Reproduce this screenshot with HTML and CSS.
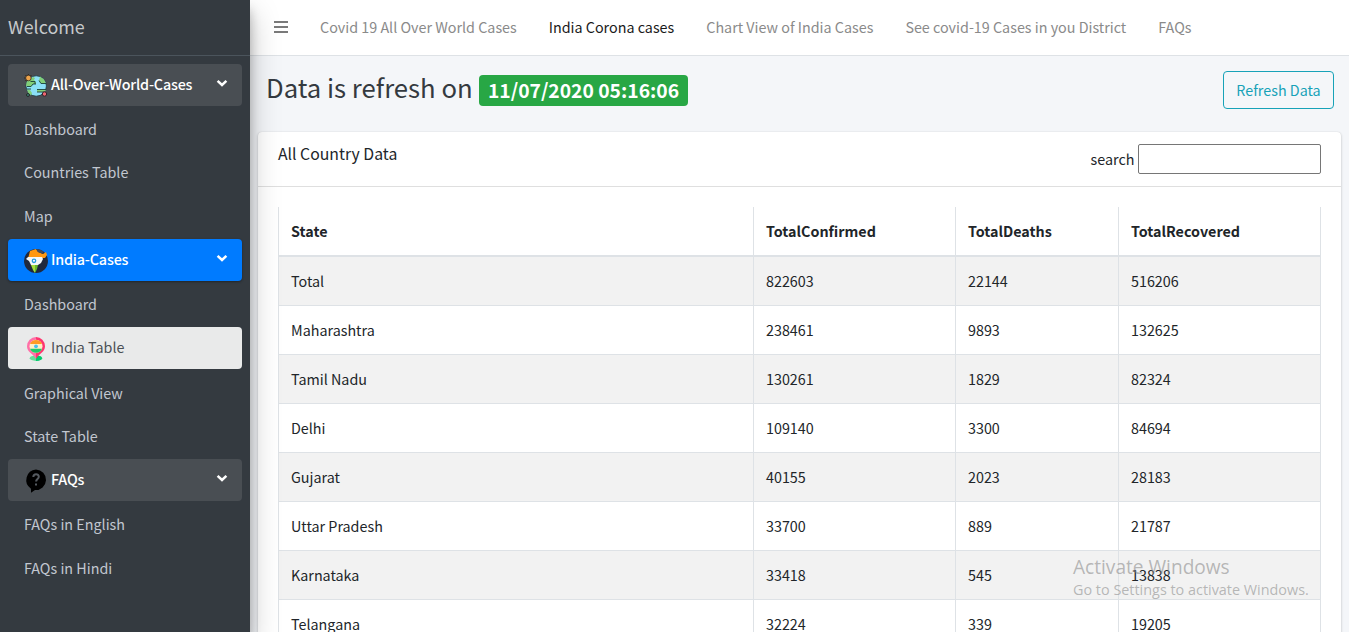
FILE: index.html
```html
<!DOCTYPE html>
<html lang="en">
<head>
<meta charset="utf-8">
<title>India Corona cases</title>
<link rel="stylesheet" href="styles.css">
</head>
<body>
<div class="wrapper">
  <aside class="sidebar">
    <div class="brand">Welcome</div>
    <nav class="menu">
      <div class="group group-world">
        <a class="item head">
          <svg class="icon" viewBox="0 0 24 24"><circle cx="12.200" cy="12" r="10.200" fill="#8be0f7" stroke="#17343c" stroke-width=".7"/><path d="M2.500 8.500L5 5.500 9 3l2 1-1 2 2 2v2H9l-2 3-5-1zM16 2.500l4 3 2 4h-5l-2-3zM3 15l3 1 2 3-1 2.500-3-3zM13 15.500h9l-1 2.500h-8z" fill="#82cf79"/><path d="M6.500 7.500H11v2.500M3 12.500h4l2-2.500h3M15 6.500l2 3h5M3 15h4M13 15.500h9M13 18h8" fill="none" stroke="#193f3a" stroke-width=".9"/><circle cx="4.400" cy="4" r="2.800" fill="#eda34b" stroke="#33291f" stroke-width=".8"/><path d="M4.400 0v1M0 4h1.200M1.400 1l1 1M7.500 1l-1 1M1.300 7l1-1" stroke="#33291f"/><circle cx="20.500" cy="20" r="2.200" fill="#ed6670" stroke="#33222a"/><circle cx="4" cy="21" r="1.400" fill="#439b8d" stroke="#222"/></svg>
          <span>All-Over-World-Cases</span>
          <svg class="caret" viewBox="0 0 12 8"><path d="M1.600 1.800L6 6l4.400-4.200" /></svg>
        </a>
        <a class="item">Dashboard</a>
        <a class="item">Countries Table</a>
        <a class="item">Map</a>
      </div>
      <div class="group">
        <a class="item head active">
          <svg class="icon" viewBox="0 0 24 24"><circle cx="12" cy="12" r="12" fill="#20293d"/><path d="M6 2l6-2 2 3 5 2 3-2 1 3-2 3H4l1-3z" fill="#ff9811"/><path d="M12 0q5 0 8 3l-2 1.500-4-1.500z" fill="#424b5d"/><path d="M4 8h14l1 2-2 4-3 2H7L5 12 2 10z" fill="#f4f8fa"/><path d="M7 16h4v8l-2-3z" fill="#a6df3c"/><path d="M11 16h3l-1 4-2 4z" fill="#67b82d"/><circle cx="10" cy="11.800" r="1.700" fill="#fff" stroke="#249cdf" stroke-width="1.300"/></svg>
          <span>India-Cases</span>
          <svg class="caret" viewBox="0 0 12 8"><path d="M1.600 1.800L6 6l4.400-4.200" /></svg>
        </a>
        <a class="item">Dashboard</a>
        <a class="item current">
          <svg class="icon" viewBox="0 0 24 24"><ellipse cx="12" cy="21.200" rx="6.300" ry="2.700" fill="#63df99"/><path d="M12 18.500c8 0 8 5.400 0 5.400z" fill="#00c86e"/><path d="M12 0a9 9.300 0 0 0-9 9.300c0 6 6 7 9 12.700z" fill="#ff70a8"/><path d="M12 0a9 9.300 0 0 1 9 9.300c0 6-6 7-9 12.700z" fill="#ff356f"/><circle cx="12" cy="9.300" r="6.500" fill="#fff0c9"/><path d="M6 7a6.500 6.500 0 0 1 12 0z" fill="#ff9b24"/><path d="M6 11.800a6.500 6.500 0 0 0 12 0z" fill="#20c968"/><circle cx="12" cy="9.300" r="1.900" fill="#48bfed"/></svg>
          <span>India Table</span>
        </a>
        <a class="item graph">Graphical View</a>
        <a class="item">State Table</a>
      </div>
      <div class="group">
        <a class="item head faq">
          <svg class="icon" viewBox="0 0 24 24"><path d="M12 .5a10.500 10.300 0 1 1-1 20.600L7 23.700v-4A10.500 10.500 0 0 1 12 .5z" fill="#000"/><path d="M9.300 8c.2-3.700 5.500-3.500 5.500-.3 0 2.300-2.700 2.300-2.700 4.800M12 14.500v2" fill="none" stroke="#555a60" stroke-width="2"/></svg>
          <span>FAQs</span>
          <svg class="caret" viewBox="0 0 12 8"><path d="M1.600 1.800L6 6l4.400-4.200" /></svg>
        </a>
        <a class="item">FAQs in English</a>
        <a class="item">FAQs in Hindi</a>
      </div>
    </nav>
  </aside>
  <div class="page">
    <header class="navbar">
      <svg class="bars" viewBox="0 0 14 12"><path d="M0 1h14M0 6h14M0 11h14"/></svg>
      <a>Covid 19 All Over World Cases</a>
      <a class="on">India Corona cases</a>
      <a>Chart View of India Cases</a>
      <a>See covid-19 Cases in you District</a>
      <a>FAQs</a>
    </header>
    <div class="title-row">
      <h1 class="title">Data is refresh on</h1>
      <span class="badge">11/07/2020 05:16:06</span>
      <button class="refresh">Refresh Data</button>
    </div>
    <section class="card">
      <div class="card-header">
        <h3 class="card-title">All Country Data</h3>
        <label class="search"><span>search</span><input type="text"></label>
      </div>
      <table class="table">
        <colgroup><col class="c1"><col class="c2"><col class="c3"><col class="c4"></colgroup>
        <thead><tr><th>State</th><th>TotalConfirmed</th><th>TotalDeaths</th><th>TotalRecovered</th></tr></thead>
        <tbody>
          <tr><td>Total</td><td>822603</td><td>22144</td><td>516206</td></tr>
          <tr><td>Maharashtra</td><td>238461</td><td>9893</td><td>132625</td></tr>
          <tr><td>Tamil Nadu</td><td>130261</td><td>1829</td><td>82324</td></tr>
          <tr><td>Delhi</td><td>109140</td><td>3300</td><td>84694</td></tr>
          <tr><td>Gujarat</td><td>40155</td><td>2023</td><td>28183</td></tr>
          <tr><td>Uttar Pradesh</td><td>33700</td><td>889</td><td>21787</td></tr>
          <tr><td>Karnataka</td><td>33418</td><td>545</td><td>13838</td></tr>
          <tr><td>Telangana</td><td>32224</td><td>339</td><td>19205</td></tr>
        </tbody>
      </table>
    </section>
  </div>
  <div class="watermark"><div class="wm-title">Activate Windows</div><div class="wm-text">Go to Settings to activate Windows.</div></div>
</div>
</body>
</html>
```
FILE: styles.css
```css
* { box-sizing: border-box; }
body {
  margin: 0;
  height: 632px;
  overflow: hidden;
  background: #f4f6f9;
  color: #212529;
  font: 400 14.33px/24px "Noto Sans CJK SC", "Noto Sans", sans-serif;
}
.wrapper { position: relative; display: flex; height: 632px; overflow: hidden; }
.sidebar {
  position: relative;
  z-index: 2;
  flex: none;
  width: 250px;
  height: 632px;
  background: #343a40;
  box-shadow: 0 14px 28px rgba(0,0,0,.25), 0 10px 10px rgba(0,0,0,.22);
}
.brand {
  height: 56px;
  padding: 0 8px;
  border-bottom: 1px solid #4b545c;
  color: #c6c9cb;
  font-size: 17.9px;
  line-height: 52px;
}
.menu { padding: 8px; }
.group { display: flex; flex-direction: column; gap: 2px; margin-bottom: 2px; }
.group-world { gap: 1.7px; }
.item {
  display: flex;
  align-items: center;
  height: 42px;
  padding: 0 14px 0 16px;
  border-radius: 4px;
  color: #c2c7d0;
  white-space: nowrap;
}
.head { background: #494e53; color: #fff; font-weight: 500; letter-spacing: -.18px; }
.head span, .current span { margin-bottom: 2px; }
.active { background: #007bff; box-shadow: 0 1px 3px rgba(0,0,0,.12), 0 1px 2px rgba(0,0,0,.24); }
.current { background: #e9eaea; color: #4b5055; }
.graph { padding-top: 1px; }
.icon { flex: none; width: 24px; height: 24px; margin: 2px 3px 0 0; }
.caret { width: 12px; height: 8px; margin: -4px 0 0 auto; }
.caret path { fill: none; stroke: #fff; stroke-width: 2.5; }

.page { flex: none; width: 1099px; }
.navbar {
  display: flex;
  align-items: center;
  height: 56px;
  padding: 0 0 0 24px;
  background: #fff;
  border-bottom: 1px solid #dee2e6;
  color: #8a8a8a;
  white-space: nowrap;
}
.navbar a { margin: 0 32px 2px 0; }
.bars { width: 14px; height: 12px; margin: 0 32px 1px 0; }
.bars path { stroke: #7a7a7a; stroke-width: 2; }
.navbar .on { color: #1a1a1a; }
.title-row { display: flex; align-items: flex-start; height: 76px; padding: 15px 15px 0 16px; }
.title { margin: 0; width: 213px; font-size: 25.7px; font-weight: 400; line-height: 32px; white-space: nowrap; color: #343a40; }
.badge {
  width: 209px;
  height: 31px;
  margin-top: 4px;
  border-radius: 4px;
  background: #28a745;
  color: #fff;
  font-size: 19.3px;
  font-weight: 700;
  line-height: 31px;
  text-align: center;
  white-space: nowrap;
}
.refresh {
  width: 111px;
  height: 38px;
  margin-left: auto;
  padding: 0;
  border: 1px solid #17a2b8;
  border-radius: 4px;
  background: transparent;
  color: #17a2b8;
  font: inherit;
  white-space: nowrap;
}
.card {
  width: 1083px;
  height: 560px;
  margin-left: 8px;
  border-radius: 4px;
  background: #fff;
  box-shadow: 0 0 1px rgba(0,0,0,.125), 0 1px 3px rgba(0,0,0,.2);
}
.card-header { display: flex; justify-content: space-between; height: 55px; padding: 12px 20px 0; border-bottom: 1px solid #dfdfdf; }
.card-title { margin: 0; font-size: 15.8px; font-weight: 400; line-height: 20px; }
.search { display: flex; align-items: center; gap: 3.5px; height: 30px; }
.search input { width: 183px; height: 30px; border: 1px solid #767676; border-radius: 2px; background: #fff; }
.table { width: 1043px; margin: 20px 20px 0; table-layout: fixed; border-spacing: 0; border-right: 1px solid #dee2e6; }
.c1 { width: 475px; }
.c2 { width: 202px; }
.c3 { width: 163px; }
.c4 { width: 202px; }
.table th, .table td { height: 49px; padding: 0 12px; border-left: 1px solid #dee2e6; border-bottom: 1px solid #dee2e6; text-align: left; }
.table th { height: 50px; border-bottom-width: 2px; font-weight: 700; }
.table tbody tr:nth-child(odd) { background: #f2f2f2; }

.watermark { position: absolute; z-index: 3; left: 1073px; top: 554px; color: rgba(130,130,130,.55); font-family: "Open Sans", sans-serif; white-space: nowrap; }
.wm-title { font-size: 19.1px; line-height: 26px; }
.wm-text { font-size: 14.4px; line-height: 20px; }
```
